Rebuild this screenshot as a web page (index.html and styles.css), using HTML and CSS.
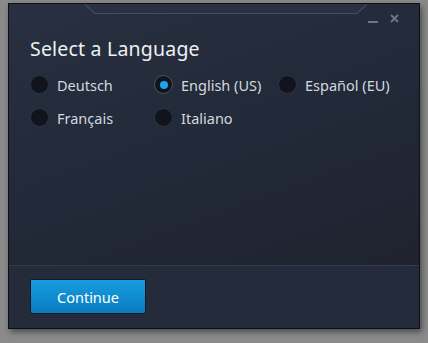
FILE: index.html
```html
<!DOCTYPE html>
<html>
<head>
<meta charset="utf-8">
<link rel="stylesheet" href="styles.css">
</head>
<body>
<div class="window">
  <svg class="tab" width="282" height="12" viewBox="0 0 282 12">
    <polygon points="0,0 282,0 272,9.5 10,9.5" fill="#293142"/>
    <polyline points="0,0.5 10,9.5 272,9.5 282,0.5" fill="none" stroke="#434d60" stroke-width="1.2"/>
  </svg>
  <div class="controls">
    <span class="min"></span>
    <svg class="close" width="9" height="9" viewBox="0 0 9 9"><path d="M1 1L8 8M8 1L1 8" stroke="#6d7588" stroke-width="1.8"/></svg>
  </div>
  <div class="body">
    <h1 class="title">Select a Language</h1>
    <div class="langs">
      <label class="opt"><span class="radio"></span>Deutsch</label>
      <label class="opt"><span class="radio on"></span>English (US)</label>
      <label class="opt"><span class="radio"></span>Español (EU)</label>
      <label class="opt"><span class="radio"></span>Français</label>
      <label class="opt"><span class="radio"></span>Italiano</label>
    </div>
  </div>
  <div class="footer">
    <button class="btn">Continue</button>
  </div>
</div>
</body>
</html>
```
FILE: styles.css
```css
html, body { margin: 0; padding: 0; }
body {
  background: #8a8a8a;
  width: 428px;
  height: 343px;
  overflow: hidden;
  font-family: "Noto Sans", "DejaVu Sans", sans-serif;
}
.window {
  position: relative;
  margin: 3px 0 0 8px;
  width: 410px;
  height: 324px;
  border: 1px solid #0d0f14;
  background: linear-gradient(160deg, #283041 0%, #222938 45%, #1d212c 100%);
  box-shadow: 2px 3px 6px rgba(0,0,0,0.45);
  display: flex;
  flex-direction: column;
}
.tab {
  position: absolute;
  left: 76px;
  top: 0;
  display: block;
}
.controls {
  position: absolute;
  right: 20px;
  top: 10px;
  display: flex;
  align-items: flex-end;
  gap: 12px;
}
.min {
  display: block;
  width: 10px;
  height: 2px;
  background: #6d7588;
}
.close { display: block; }
.body {
  flex: 1;
  padding: 32px 0 0 21px;
}
.title {
  margin: 0;
  font-weight: normal;
  font-size: 19.5px;
  line-height: 26px;
  color: #eef0f4;
  letter-spacing: 0.2px;
}
.langs {
  margin-top: 13px;
  display: grid;
  grid-template-columns: 124px 124px 124px;
  row-gap: 14px;
}
.opt {
  display: flex;
  align-items: center;
  gap: 8px;
  height: 19px;
  font-size: 14.5px;
  color: #d4d8df;
}
.radio {
  width: 17px;
  height: 17px;
  border-radius: 50%;
  background: #11141c;
  border: 1px solid #2c3343;
  display: flex;
  align-items: center;
  justify-content: center;
}
.radio.on { border-color: #4b5363; }
.radio.on::after {
  content: "";
  width: 8px;
  height: 8px;
  border-radius: 50%;
  background: #1ea2ef;
}
.footer {
  height: 63px;
  border-top: 1px solid #333b4c;
  background: #242b3a;
  padding: 14px 0 0 22px;
  box-sizing: border-box;
}
.btn {
  width: 114px;
  height: 33px;
  border: none;
  border-radius: 1px;
  background: linear-gradient(#169ddf, #0a7bc0);
  color: #fff;
  font-family: inherit;
  font-size: 14.5px;
  box-shadow: 0 0 0 1px #151923;
}
```
